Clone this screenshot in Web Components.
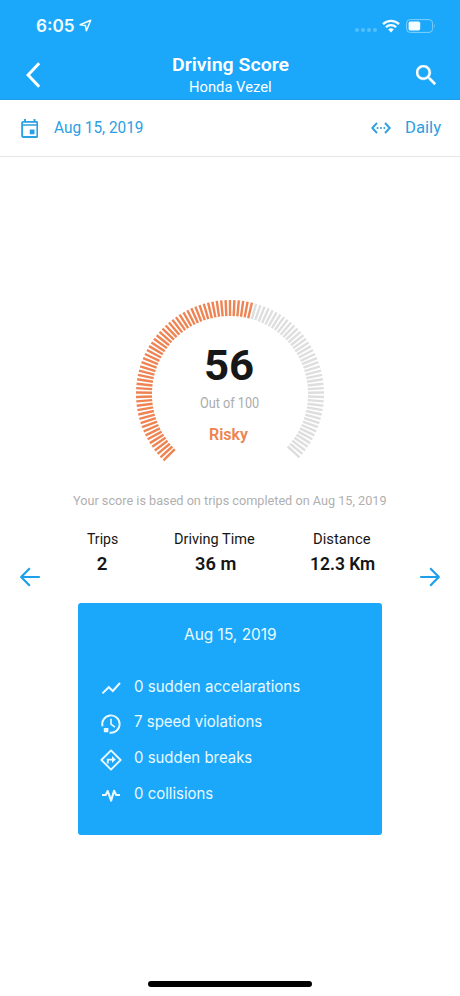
<!DOCTYPE html>
<html lang="en">
<head>
<meta charset="utf-8">
<title>Driving Score</title>
<style>
html,body{margin:0;padding:0;background:#fff}
body{font-family:Roboto,"Open Sans",sans-serif}
</style>
</head>
<body>
<score-app></score-app>
<script>
const define = (name, html, setup) => customElements.define(name, class extends HTMLElement {
  connectedCallback() {
    if (this.shadowRoot) return;
    const root = this.attachShadow({ mode: 'open' });
    const t = document.createElement('template');
    t.innerHTML = html;
    if (setup) setup(this, t.content);
    root.append(t.content.cloneNode(true));
  }
});

/* One line of text whose glyphs span exactly w pixels. */
const pen = document.createElement('canvas').getContext('2d');
define('fit-text', `<style>
  :host{display:block;flex:none;white-space:nowrap}
  span{display:inline-block;vertical-align:top;transform-origin:0 0}
</style><span></span>`, (el, root) => {
  const a = n => el.getAttribute(n);
  const span = root.querySelector('span');
  const family = a('face') === 'inter' ? 'Inter, sans-serif' : 'Roboto, sans-serif';
  const weight = a('weight') || '400';
  span.textContent = a('text');
  el.style.width = a('w') + 'px';
  el.style.height = el.style.lineHeight = a('line') + 'px';
  span.style.font = `${weight} ${a('size')}px/${a('line')}px ${family}`;
  pen.font = `${weight} ${a('size')}px ${family}`;
  const m = pen.measureText(a('text'));
  const k = +a('w') / (m.actualBoundingBoxLeft + m.actualBoundingBoxRight);
  span.style.transform = `translateX(${(m.actualBoundingBoxLeft * k).toFixed(2)}px) scaleX(${k.toFixed(4)})`;
});

const icons = {
  nav: ['0 0 14 14', '<path d="M1.2 6.2 12.6 1.3 8 12.7 6.9 7z" fill="none" stroke="currentColor" stroke-width="1.6" stroke-linejoin="round"/>'],
  wifi: ['0 0 18 14', '<g fill="none" stroke="currentColor" stroke-width="2.3"><path d="M1 5.1a11.4 11.4 0 0 1 16 0"/><path d="M3.9 8.2a7.2 7.2 0 0 1 10.2 0"/></g><path d="M9 13.4 6.2 10.6a4 4 0 0 1 5.6 0z" fill="currentColor"/>'],
  battery: ['0 0 30 14', '<rect x=".6" y=".6" width="26" height="12.8" rx="3.6" fill="none" stroke="#7fd0fc" stroke-width="1"/><rect x="2.6" y="2.6" width="11.6" height="8.8" rx="1.7" fill="currentColor"/><path d="M28.3 4.8q1.5 2.2 0 4.4z" fill="#7fd0fc"/>'],
  back: ['0 0 14 26', '<path d="M13.2 1.2 2.1 13l11.1 11.8" fill="none" stroke="currentColor" stroke-width="3"/>'],
  search: ['3 3 17.5 17.5', '<path stroke="currentColor" stroke-width=".3" fill="currentColor" d="M15.5 14h-.79l-.28-.27C15.41 12.59 16 11.11 16 9.5 16 5.91 13.09 3 9.5 3S3 5.91 3 9.5 5.91 16 9.5 16c1.61 0 3.09-.59 4.23-1.57l.27.28v.79l5 4.99L20.49 19zm-6 0C7.01 14 5 11.99 5 9.5S7.01 5 9.5 5 14 7.01 14 9.5 11.99 14 9.5 14"/>'],
  calendar: ['3 1 18 20', '<path fill="currentColor" d="M17 12h-5v5h5zM16 1v2H8V1H6v2H5c-1.11 0-1.99.9-1.99 2L3 19c0 1.1.89 2 2 2h14c1.1 0 2-.9 2-2V5c0-1.1-.9-2-2-2h-1V1zm3 18H5V8h14zM19 6.4H5V5h14z"/>'],
  range: ['0 0 20 12', '<path d="M6 1 1.3 6 6 11M14 1l4.7 5L14 11" fill="none" stroke="currentColor" stroke-width="1.9"/><g fill="currentColor"><circle cx="6.6" cy="6" r="1.05"/><circle cx="10" cy="6" r="1.05"/><circle cx="13.4" cy="6" r="1.05"/></g>'],
  prev: ['0 0 20 20', '<path d="M9.8 1.2 1.2 10l8.6 8.8M1.2 10h18.6" fill="none" stroke="currentColor" stroke-width="2.2" stroke-linejoin="round"/>'],
  next: ['0 0 20 20', '<path d="M10.2 1.2 18.8 10l-8.6 8.8M18.8 10H.2" fill="none" stroke="currentColor" stroke-width="2.2" stroke-linejoin="round"/>'],
  trend: ['0 0 22 22', '<path d="m2.4 16.4 6.4-6.2 4 3.8 7.2-8" fill="none" stroke="currentColor" stroke-width="2"/>'],
  clock: ['0 0 22 22', '<path d="M2.5 13.2A8.7 8.7 0 1 1 9.6 19.7" fill="none" stroke="currentColor" stroke-width="1.9"/><path d="M11 5.8v5.4l4 3" fill="none" stroke="currentColor" stroke-width="1.6"/><rect x="3.8" y="15" width="4.6" height="4.2" rx=".6" fill="currentColor"/>'],
  turn: ['0 0 22 22', '<path d="M11 1.4 20.6 11 11 20.6 1.4 11z" fill="none" stroke="currentColor" stroke-width="1.9" stroke-linejoin="round"/><path d="M7.8 14.4v-3.8h4.6" fill="none" stroke="currentColor" stroke-width="1.9"/><path d="M12 6.9 15.8 10.5 12 14z" fill="currentColor"/>'],
  pulse: ['0 0 22 22', '<path d="M2 11h3.7l2-4 3.4 9.6 3-9.8 2.1 4.2H20" fill="none" stroke="currentColor" stroke-width="2.1" stroke-linejoin="round"/>']
};
define('ui-icon', '<style>:host{display:block;flex:none}svg{display:block;width:100%;height:100%}</style><svg aria-hidden="true"></svg>', (el, root) => {
  const [box, body] = icons[el.getAttribute('name')];
  const svg = root.querySelector('svg');
  svg.setAttribute('viewBox', box);
  svg.innerHTML = body;
  el.style.width = el.getAttribute('w') + 'px';
  el.style.height = el.getAttribute('h') + 'px';
});

define('status-bar', `<style>
  :host{display:flex;align-items:center;height:51px;padding:0 24px 0 36px;box-sizing:border-box;color:#f4fdff}
  .spacer{flex:1}
  .dots{display:flex;gap:1.8px;margin:9px 5.5px 0 0}
  .dots i{width:4px;height:4px;border-radius:2px;background:#55bffb}
  .nav{margin-left:4.5px}.wifi{margin-right:6px}
</style>
<fit-text face="inter" weight="600" size="16.8" line="20" w="38" text="6:05"></fit-text>
<ui-icon class="nav" name="nav" w="13" h="13"></ui-icon>
<div class="spacer"></div>
<div class="dots"><i></i><i></i><i></i><i></i></div>
<ui-icon class="wifi" name="wifi" w="18" h="14"></ui-icon>
<ui-icon name="battery" w="30" h="14"></ui-icon>`);

define('nav-bar', `<style>
  :host{display:flex;align-items:center;justify-content:space-between;height:47.5px;padding:0 24px 0 26px;box-sizing:border-box;color:#fff}
  .title{display:flex;flex-direction:column;align-items:center;gap:2px;margin-left:5px}
</style>
<ui-icon name="back" w="14" h="26"></ui-icon>
<div class="title">
  <fit-text weight="600" size="18.7" line="22" w="116" text="Driving Score"></fit-text>
  <fit-text size="14.6" line="18" w="81" text="Honda Vezel"></fit-text>
</div>
<ui-icon name="search" w="20" h="20"></ui-icon>`);

define('filter-bar', `<style>
  :host{display:flex;align-items:center;height:57px;padding:0 19px 0 20.5px;box-sizing:border-box;border-bottom:1.5px solid #e6e6e6;color:#2ba0e2}
  .spacer{flex:1}.cal{margin-right:15.5px}.range{margin-right:15px}
</style>
<ui-icon class="cal" name="calendar" w="17.5" h="19"></ui-icon>
<fit-text size="16" line="20" w="88.5" text="Aug 15, 2019"></fit-text>
<div class="spacer"></div>
<ui-icon class="range" name="range" w="20" h="12"></ui-icon>
<fit-text size="16" line="20" w="35.5" text="Daily"></fit-text>`);

define('score-gauge', `<style>
  :host{display:grid;width:190px;height:166px}
  svg,.text{grid-area:1/1}
  svg{display:block;width:190px;height:166px}
  .text{display:flex;flex-direction:column;align-items:center;padding-top:44px;margin-right:1.5px}
  .of{margin-top:6.5px;color:#ababab}.grade{margin-top:13px;color:#ec8350}.num{color:#171717}
</style>
<svg viewBox="0 0 190 166"></svg>
<div class="text">
  <fit-text class="num" weight="700" size="43" line="44" w="47.5" text="56"></fit-text>
  <fit-text class="of" size="13.8" line="18" w="58.5" text="Out of 100"></fit-text>
  <fit-text class="grade" weight="600" size="16.2" line="20" w="38" text="Risky"></fit-text>
</div>`, (el, root) => {
  const score = +el.getAttribute('score');
  let out = '';
  for (let i = 0; i < 100; i++)
    out += `<path d="M95 1v16" stroke="${i < score ? '#ee8453' : '#dedede'}" stroke-width="2.4" transform="rotate(${(-135 + i * 2.7).toFixed(1)} 95 95)"/>`;
  root.querySelector('svg').innerHTML = out;
});

define('trip-stat', `<style>
  :host{display:flex;flex-direction:column;align-items:center;gap:4px;color:#151515}
</style><slot></slot>`);

define('event-row', `<style>
  :host{display:flex;align-items:center;gap:11.5px;height:35.6px;color:#e9faff}
  ui-icon{margin-top:3px}
</style><ui-icon w="22" h="22"></ui-icon><slot></slot>`, (el, root) => {
  root.querySelector('ui-icon').setAttribute('name', el.getAttribute('icon'));
});

define('day-card', `<style>
  :host{display:block;width:304px;height:232px;background:#1ba8fa;border-radius:3px;box-sizing:border-box;padding:22px 0 0 22px;color:#e9faff}
  .date{margin:0 0 24.5px 83.5px}
</style>
<fit-text class="date" face="inter" size="15.6" line="20" w="92" text="Aug 15, 2019"></fit-text>
<event-row icon="trend"><fit-text face="inter" size="15.6" line="20" w="166" text="0 sudden accelarations"></fit-text></event-row>
<event-row icon="clock"><fit-text face="inter" size="15.6" line="20" w="128" text="7 speed violations"></fit-text></event-row>
<event-row icon="turn"><fit-text face="inter" size="15.6" line="20" w="118" text="0 sudden breaks"></fit-text></event-row>
<event-row icon="pulse"><fit-text face="inter" size="15.6" line="20" w="79" text="0 collisions"></fit-text></event-row>`);

define('score-app', `<style>
  :host{display:flex;flex-direction:column;position:relative;width:460px;height:996px;overflow:hidden;background:#fff}
  header{background:#1ba8fa;height:100px;box-sizing:border-box;border-bottom:1px solid #209de8}
  main{flex:1;display:grid;grid-template-columns:20px 1fr 20px;padding:0 20px;align-items:center;color:#1f9fea}
  .content{align-self:start;display:flex;flex-direction:column;align-items:center;padding-top:142px}
  .note{margin:26px 1px 0 0;color:#b0b0b0}
  .stats{display:flex;align-self:stretch;justify-content:space-between;margin:20px 45.5px 27.6px 46.5px}
  .stats > :nth-child(2){margin-left:3px}
  .home{position:absolute;left:148px;bottom:9.5px;width:164px;height:5.5px;border-radius:3px;background:#000}
</style>
<header><status-bar></status-bar><nav-bar></nav-bar></header>
<filter-bar></filter-bar>
<main>
  <ui-icon name="prev" w="20" h="20"></ui-icon>
  <div class="content">
    <score-gauge score="56"></score-gauge>
    <fit-text class="note" size="13.6" line="18" w="313" text="Your score is based on trips completed on Aug 15, 2019"></fit-text>
    <div class="stats">
      <trip-stat><fit-text size="15" line="20" w="30.5" text="Trips"></fit-text><fit-text weight="600" size="18.7" line="22" w="10" text="2"></fit-text></trip-stat>
      <trip-stat><fit-text size="15" line="20" w="80" text="Driving Time"></fit-text><fit-text weight="600" size="18.7" line="22" w="41" text="36 m"></fit-text></trip-stat>
      <trip-stat><fit-text size="15" line="20" w="56.5" text="Distance"></fit-text><fit-text weight="600" size="18.7" line="22" w="64" text="12.3 Km"></fit-text></trip-stat>
    </div>
    <day-card></day-card>
  </div>
  <ui-icon name="next" w="20" h="20"></ui-icon>
</main>
<div class="home"></div>`);
</script>
</body>
</html>
